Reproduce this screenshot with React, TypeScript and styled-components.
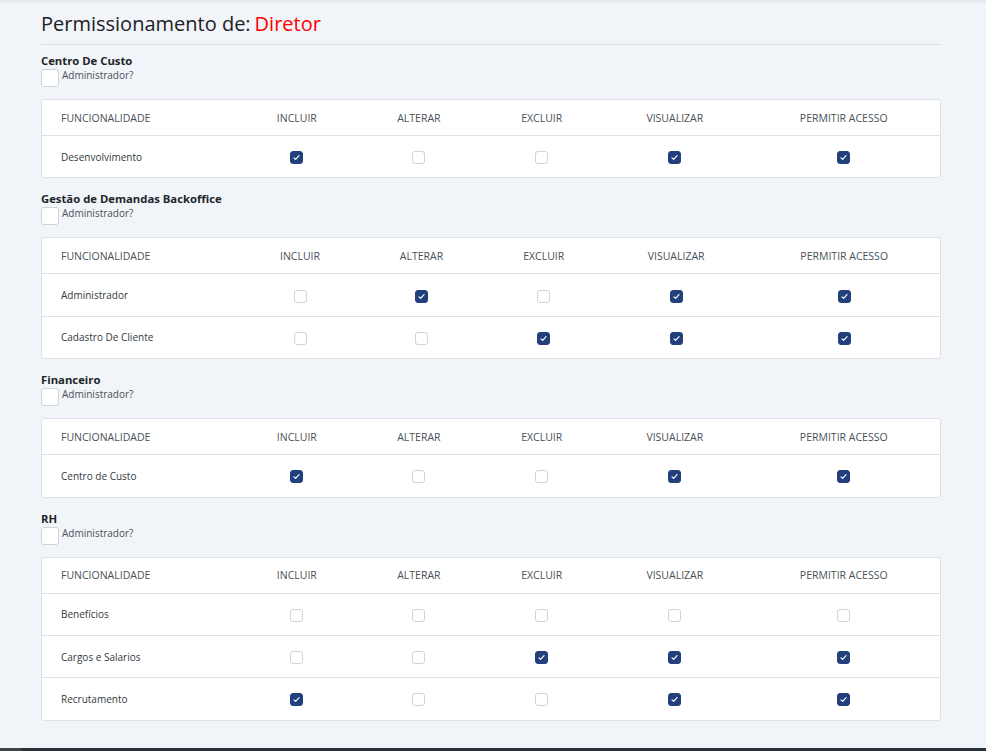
import React from 'react';
import styled, { createGlobalStyle } from 'styled-components';

const GlobalStyle = createGlobalStyle`
  body {
    margin: 0;
    background: #f1f4f8;
    font-family: "Open Sans", "Noto Sans", sans-serif;
    color: #212529;
  }
`;

const TopShadow = styled.div`
  height: 4px;
  background: linear-gradient(#e3e6ea, #f1f4f8);
`;

const Page = styled.div`
  width: 900px;
  margin-left: 41px;
  padding-top: 7px;
`;

const Title = styled.h1`
  margin: 0;
  font-size: 20px;
  font-weight: 400;
  line-height: 26px;
  color: #1d2125;
  padding-bottom: 7px;
  border-bottom: 1px solid #dde1e6;
  span {
    color: #ff0000;
    margin-left: 4px;
  }
`;

const Section = styled.section`
  margin-top: 9px;
  & + & {
    margin-top: 14px;
  }
`;

const SectionName = styled.div`
  font-size: 11.3px;
  font-weight: 700;
  line-height: 14px;
  color: #212529;
`;

const AdminRow = styled.label`
  display: flex;
  align-items: flex-start;
  gap: 3px;
  margin-top: 1px;
  font-size: 10px;
  color: #495057;
  line-height: 12px;
`;

const BigBox = styled.span`
  width: 16px;
  height: 16px;
  border: 1px solid #ced4da;
  border-radius: 3px;
  background: #fff;
`;

const Card = styled.div`
  margin-top: 12px;
  background: #fff;
  border: 1px solid #dee2e6;
  border-radius: 3px;
  overflow: hidden;
`;

const Table = styled.table`
  width: 100%;
  border-collapse: collapse;
  font-size: 10.5px;
`;

const Th = styled.th<{ $left?: boolean }>`
  height: 35px;
  padding: 0 19px;
  font-weight: 400;
  color: #495057;
  text-align: ${p => (p.$left ? 'left' : 'center')};
  white-space: nowrap;
`;

const Td = styled.td<{ $left?: boolean }>`
  height: 41.4px;
  padding: 0 19px;
  border-top: 1px solid #dee2e6;
  color: #343a40;
  font-size: 10px;
  text-align: ${p => (p.$left ? 'left' : 'center')};
  vertical-align: middle;
`;

const Check = styled.span<{ $on: boolean }>`
  display: inline-flex;
  align-items: center;
  justify-content: center;
  width: 13px;
  height: 13px;
  box-sizing: border-box;
  border-radius: 3px;
  vertical-align: middle;
  background: ${p => (p.$on ? '#21407c' : '#fff')};
  border: 1px solid ${p => (p.$on ? '#21407c' : '#ced4da')};
`;

const Footer = styled.div`
  margin-top: 27px;
  height: 40px;
  background: #263238;
  border-left: 22px solid #3b4449;
`;

type Row = { name: string; perms: boolean[] };
type Group = { title: string; rows: Row[] };

const cols = ['INCLUIR', 'ALTERAR', 'EXCLUIR', 'VISUALIZAR', 'PERMITIR ACESSO'];

const groups: Group[] = [
  { title: 'Centro De Custo', rows: [{ name: 'Desenvolvimento', perms: [true, false, false, true, true] }] },
  {
    title: 'Gestão de Demandas Backoffice',
    rows: [
      { name: 'Administrador', perms: [false, true, false, true, true] },
      { name: 'Cadastro De Cliente', perms: [false, false, true, true, true] },
    ],
  },
  { title: 'Financeiro', rows: [{ name: 'Centro de Custo', perms: [true, false, false, true, true] }] },
  {
    title: 'RH',
    rows: [
      { name: 'Benefícios', perms: [false, false, false, false, false] },
      { name: 'Cargos e Salarios', perms: [false, false, true, true, true] },
      { name: 'Recrutamento', perms: [true, false, false, true, true] },
    ],
  },
];

const Tick = () => (
  <svg width="9" height="9" viewBox="0 0 16 16" fill="none">
    <path d="M3.5 8.5l3 3 6-7" stroke="#fff" strokeWidth="2" strokeLinecap="round" strokeLinejoin="round" />
  </svg>
);

const App: React.FC = () => (
  <>
    <GlobalStyle />
    <TopShadow />
    <Page>
      <Title>
        Permissionamento de:<span>Diretor</span>
      </Title>
      {groups.map(g => (
        <Section key={g.title}>
          <SectionName>{g.title}</SectionName>
          <AdminRow>
            <BigBox />
            Administrador?
          </AdminRow>
          <Card>
            <Table>
              <thead>
                <tr>
                  <Th $left>FUNCIONALIDADE</Th>
                  {cols.map(c => (
                    <Th key={c}>{c}</Th>
                  ))}
                </tr>
              </thead>
              <tbody>
                {g.rows.map(r => (
                  <tr key={r.name}>
                    <Td $left>{r.name}</Td>
                    {r.perms.map((on, i) => (
                      <Td key={i}>
                        <Check $on={on}>{on && <Tick />}</Check>
                      </Td>
                    ))}
                  </tr>
                ))}
              </tbody>
            </Table>
          </Card>
        </Section>
      ))}
    </Page>
    <Footer />
  </>
);

export default App;
